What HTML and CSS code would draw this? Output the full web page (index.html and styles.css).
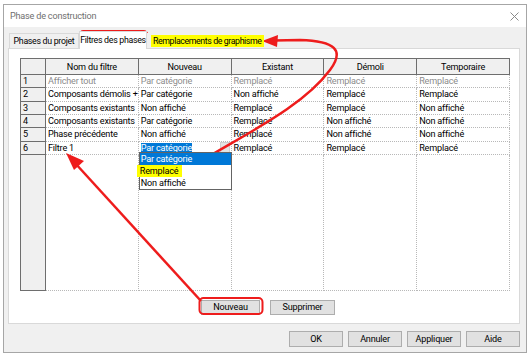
FILE: index.html
```html
<!DOCTYPE html>
<html lang="fr">
<head>
<meta charset="utf-8">
<title>Phase de construction</title>
<link rel="stylesheet" href="styles.css">
</head>
<body>
<div class="window">
  <div class="titlebar">
    <span class="title">Phase de construction</span>
    <svg class="close" width="9" height="9" viewBox="0 0 9 9"><path d="M0.5 0.5 L8.5 8.5 M8.5 0.5 L0.5 8.5" stroke="#8a8a8a" stroke-width="1"/></svg>
  </div>
  <div class="tabstrip">
    <div class="tab first">Phases du projet</div>
    <div class="tab active">Filtres des phases</div>
    <div class="tab plain"><span class="hl">Remplacements de graphisme</span></div>
  </div>
  <div class="panel">
    <table class="grid">
      <colgroup>
        <col class="c0"><col class="c1"><col class="c1"><col class="c1"><col class="c1"><col class="c1">
      </colgroup>
      <thead>
        <tr><th class="corner"></th><th>Nom du filtre</th><th>Nouveau</th><th>Existant</th><th>Démoli</th><th>Temporaire</th></tr>
      </thead>
      <tbody>
        <tr class="dim"><th class="rh">1</th><td>Afficher tout</td><td>Par catégorie</td><td>Remplacé</td><td>Remplacé</td><td>Remplacé</td></tr>
        <tr><th class="rh">2</th><td>Composants démolis + </td><td>Par catégorie</td><td>Non affiché</td><td>Remplacé</td><td>Remplacé</td></tr>
        <tr><th class="rh">3</th><td>Composants existants</td><td>Non affiché</td><td>Remplacé</td><td>Remplacé</td><td>Non affiché</td></tr>
        <tr><th class="rh">4</th><td>Composants existants</td><td>Par catégorie</td><td>Remplacé</td><td>Non affiché</td><td>Non affiché</td></tr>
        <tr><th class="rh">5</th><td>Phase précédente</td><td>Non affiché</td><td>Remplacé</td><td>Non affiché</td><td>Non affiché</td></tr>
        <tr><th class="rh">6</th><td>Filtre 1</td><td class="combo"><span class="sel">Par catégorie</span><span class="ddbtn"></span>
          <div class="ddlist">
            <div class="opt on">Par catégorie</div>
            <div class="opt"><span class="hl2">Remplacé</span></div>
            <div class="opt">Non affiché</div>
          </div></td><td>Remplacé</td><td>Remplacé</td><td>Remplacé</td></tr>
        <tr class="filler"><th class="rh"></th><td></td><td></td><td></td><td></td><td></td></tr>
      </tbody>
    </table>
    <div class="actions">
      <button class="btn">Nouveau</button>
      <button class="btn wide">Supprimer</button>
    </div>
  </div>
  <div class="footer">
    <button class="btn fb">OK</button>
    <button class="btn fb">Annuler</button>
    <button class="btn fb">Appliquer</button>
    <button class="btn fb">Aide</button>
  </div>
</div>
<svg class="annot" width="532" height="358" viewBox="0 0 532 358">
  <rect x="79.5" y="31" width="68" height="17" rx="4" fill="none" stroke="#ee1c1c" stroke-width="2"/>
  <rect x="199.5" y="298" width="63" height="16" rx="4" fill="none" stroke="#ee1c1c" stroke-width="2"/>
  <path d="M185 171 C 240 136, 300 110, 330 70 C 345 50, 335 41, 300 40 L 274 40.5" fill="none" stroke="#ee1c1c" stroke-width="2.5"/>
  <polygon points="262,41 278,35 277,47" fill="#ee1c1c"/>
  <path d="M201 301 L 75 163" fill="none" stroke="#ee1c1c" stroke-width="2.5"/>
  <polygon points="66,153 84,161 74,170" fill="#ee1c1c"/>
</svg>
</body>
</html>
```
FILE: styles.css
```css
* { box-sizing: border-box; }
html, body { margin: 0; padding: 0; background: #ffffff; }
body {
  width: 532px;
  height: 358px;
  position: relative;
  overflow: hidden;
  font-family: Roboto, "Noto Sans", sans-serif;
  font-size: 9.1px;
  letter-spacing: -0.2px;
  color: #000;
}
.window {
  margin: 4px 0 0 3px;
  width: 524px;
  height: 349px;
  border: 1px solid #a6a6a6;
  background: #f0f0f0;
  display: flex;
  flex-direction: column;
}
.titlebar {
  height: 22px;
  background: #ffffff;
  display: flex;
  align-items: center;
  justify-content: space-between;
  padding: 0 7px 0 6px;
  flex: none;
}
.title { color: #6f6f6f; }
.close { display: block; }
.tabstrip {
  height: 21px;
  display: flex;
  align-items: flex-end;
  padding-left: 5px;
  flex: none;
  position: relative;
  z-index: 1;
  font-size: 8.8px;
  letter-spacing: -0.3px;
}
.tab {
  height: 15px;
  padding: 0;
  display: flex;
  align-items: center;
  justify-content: center;
  border: 1px solid #d9d9d9;
  border-bottom: none;
  background: #f0f0f0;
  white-space: nowrap;
}
.tab.first { width: 70px; }
.tab.active {
  width: 68px;
  height: 18px;
  background: #ffffff;
  margin-bottom: -1px;
  padding-bottom: 2px;
}
.tab.plain { border: none; padding: 0 0 0 4px; }
.hl { background: #ffff00; padding: 1px 2px; letter-spacing: -0.4px; }
.panel {
  margin-left: 4px;
  width: 512px;
  height: 276px;
  background: #ffffff;
  border: 1px solid #d9d9d9;
  padding: 9px 0 0 11px;
  flex: none;
  display: flex;
  flex-direction: column;
}
.grid {
  border-collapse: collapse;
  table-layout: fixed;
  width: 489px;
}
.c0 { width: 25px; }
.c1 { width: 92.8px; }
.grid th, .grid td {
  padding: 0 0 0 2px;
  height: 13.33px;
  line-height: 12px;
  white-space: nowrap;
  text-align: left;
  font-weight: normal;
}
.grid td {
  border: 1px dotted #b8b8b8;
  overflow: hidden;
}
.grid thead th {
  height: 16px;
  background: #f0f0f0;
  border: 1px solid #6e6e6e;
  text-align: center;
  padding: 0;
}
.grid th.rh {
  background: #f0f0f0;
  border: 1px solid #6e6e6e;
}
.dim td { color: #8c8c8c; }
.filler td, .filler th { height: 136px; }
.grid td.combo { position: relative; overflow: visible; }
.sel { background: #0078d7; color: #fff; }
.ddbtn {
  position: absolute;
  right: 1px;
  top: 0;
  width: 10px;
  height: 12px;
  background: #e3e3e3;
  border: 1px solid #cfcfcf;
}
.ddlist {
  position: absolute;
  left: 0;
  top: calc(100% - 2px);
  width: 93px;
  border: 1px solid #646464;
  background: #fff;
  z-index: 2;
}
.opt { height: 12px; line-height: 12px; padding-left: 1px; }
.opt.on { background: #0078d7; color: #fff; }
.hl2 { background: #ffff00; margin-left: -4px; padding: 1px 4px 1px 3px; }
.actions {
  display: flex;
  justify-content: center;
  gap: 10px;
  margin-top: 9px;
  padding-right: 3px;
}
.btn {
  font: inherit;
  letter-spacing: inherit;
  color: #000;
  height: 15px;
  width: 59px;
  padding: 0;
  background: #e1e1e1;
  border: 1px solid #adadad;
  line-height: 12px;
}
.btn.wide { width: 65px; }
.footer {
  display: flex;
  justify-content: flex-end;
  gap: 5px;
  padding: 7px 6px 0 0;
}
.btn.fb { width: 54px; height: 16px; }
.annot {
  position: absolute;
  left: 0;
  top: 0;
  pointer-events: none;
}
```
